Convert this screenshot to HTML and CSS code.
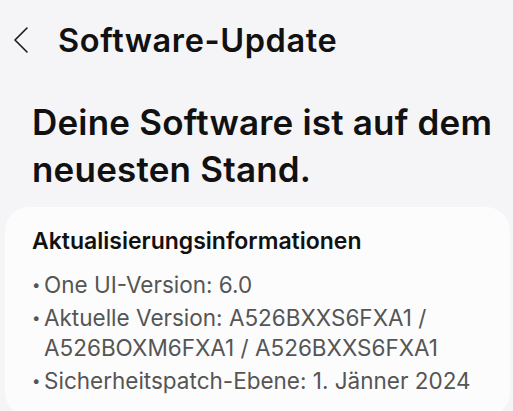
FILE: index.html
```
<!DOCTYPE html>
<html lang="de">
<head>
  <meta charset="UTF-8" />
  <title>Software-Update</title>
  <meta name="viewport" content="width=device-width, initial-scale=1.0" />
  <link rel="stylesheet" href="styles.css">
</head>
<body>

  <header class="app-bar">
    <button class="back-btn" title="Zurück">
      <svg width="16" height="28" viewBox="0 0 16 28">
        <path d="M14 2 L2 14 L14 26" fill="none" stroke="#1a1a1a" stroke-width="1.6" stroke-linecap="round" stroke-linejoin="round"/>
      </svg>
    </button>
    <h1 class="app-title">Software-Update</h1>
  </header>

  <main class="content">
    <h2 class="status">Deine Software ist auf dem neuesten Stand.</h2>

    <section class="card">
      <h3 class="card-title">Aktualisierungsinformationen</h3>
      <ul class="info-list">
        <li>One UI-Version: 6.0</li>
        <li>Aktuelle Version: A526BXXS6FXA1 / A526BOXM6FXA1 / A526BXXS6FXA1</li>
        <li>Sicherheitspatch-Ebene: 1. Jänner 2024</li>
      </ul>
    </section>
  </main>

</body>
</html>
```

FILE: styles.css
```
:root {
  --page-bg: #f5f5f7;
  --card-bg: #fcfcfd;
  --text-dark: #111111;
  --text-gray: #555555;
}

body {
  margin: 0;
  background: var(--page-bg);
  font-family: Inter, 'Noto Sans', sans-serif;
  color: var(--text-dark);
  width: 513px;
  height: 411px;
  overflow: hidden;
}

/* --- App bar --- */
.app-bar {
  display: flex;
  align-items: center;
  height: 80px;
  padding-left: 13px;
}
.back-btn {
  background: none;
  border: none;
  padding: 0;
  width: 20px;
  height: 28px;
  display: flex;
  align-items: center;
  margin-right: 25px;
}
.app-title {
  margin: 0;
  font-size: 32.5px;
  font-weight: 600;
  letter-spacing: 0.6px;
}

/* --- Status text --- */
.status {
  margin: 19px 10px 0 32px;
  font-size: 35px;
  font-weight: 600;
  line-height: 47px;
  letter-spacing: 0.2px;
}

/* --- Info card --- */
.card {
  background: var(--card-bg);
  margin: 14px 3px 0 5px;
  border-radius: 24px;
  padding: 19px 20px 20px 27px;
}
.card-title {
  margin: 0;
  font-size: 23px;
  font-weight: 600;
  line-height: 30px;
}
.info-list {
  list-style: none;
  margin: 14px 0 0 0;
  padding: 0;
  color: var(--text-gray);
  font-size: 22.5px;
  line-height: 30px;
}
.info-list li {
  display: flex;
  margin-top: 3px;
}
.info-list li::before {
  content: "•";
  flex: 0 0 12px;
  font-size: 15px;
}
```
